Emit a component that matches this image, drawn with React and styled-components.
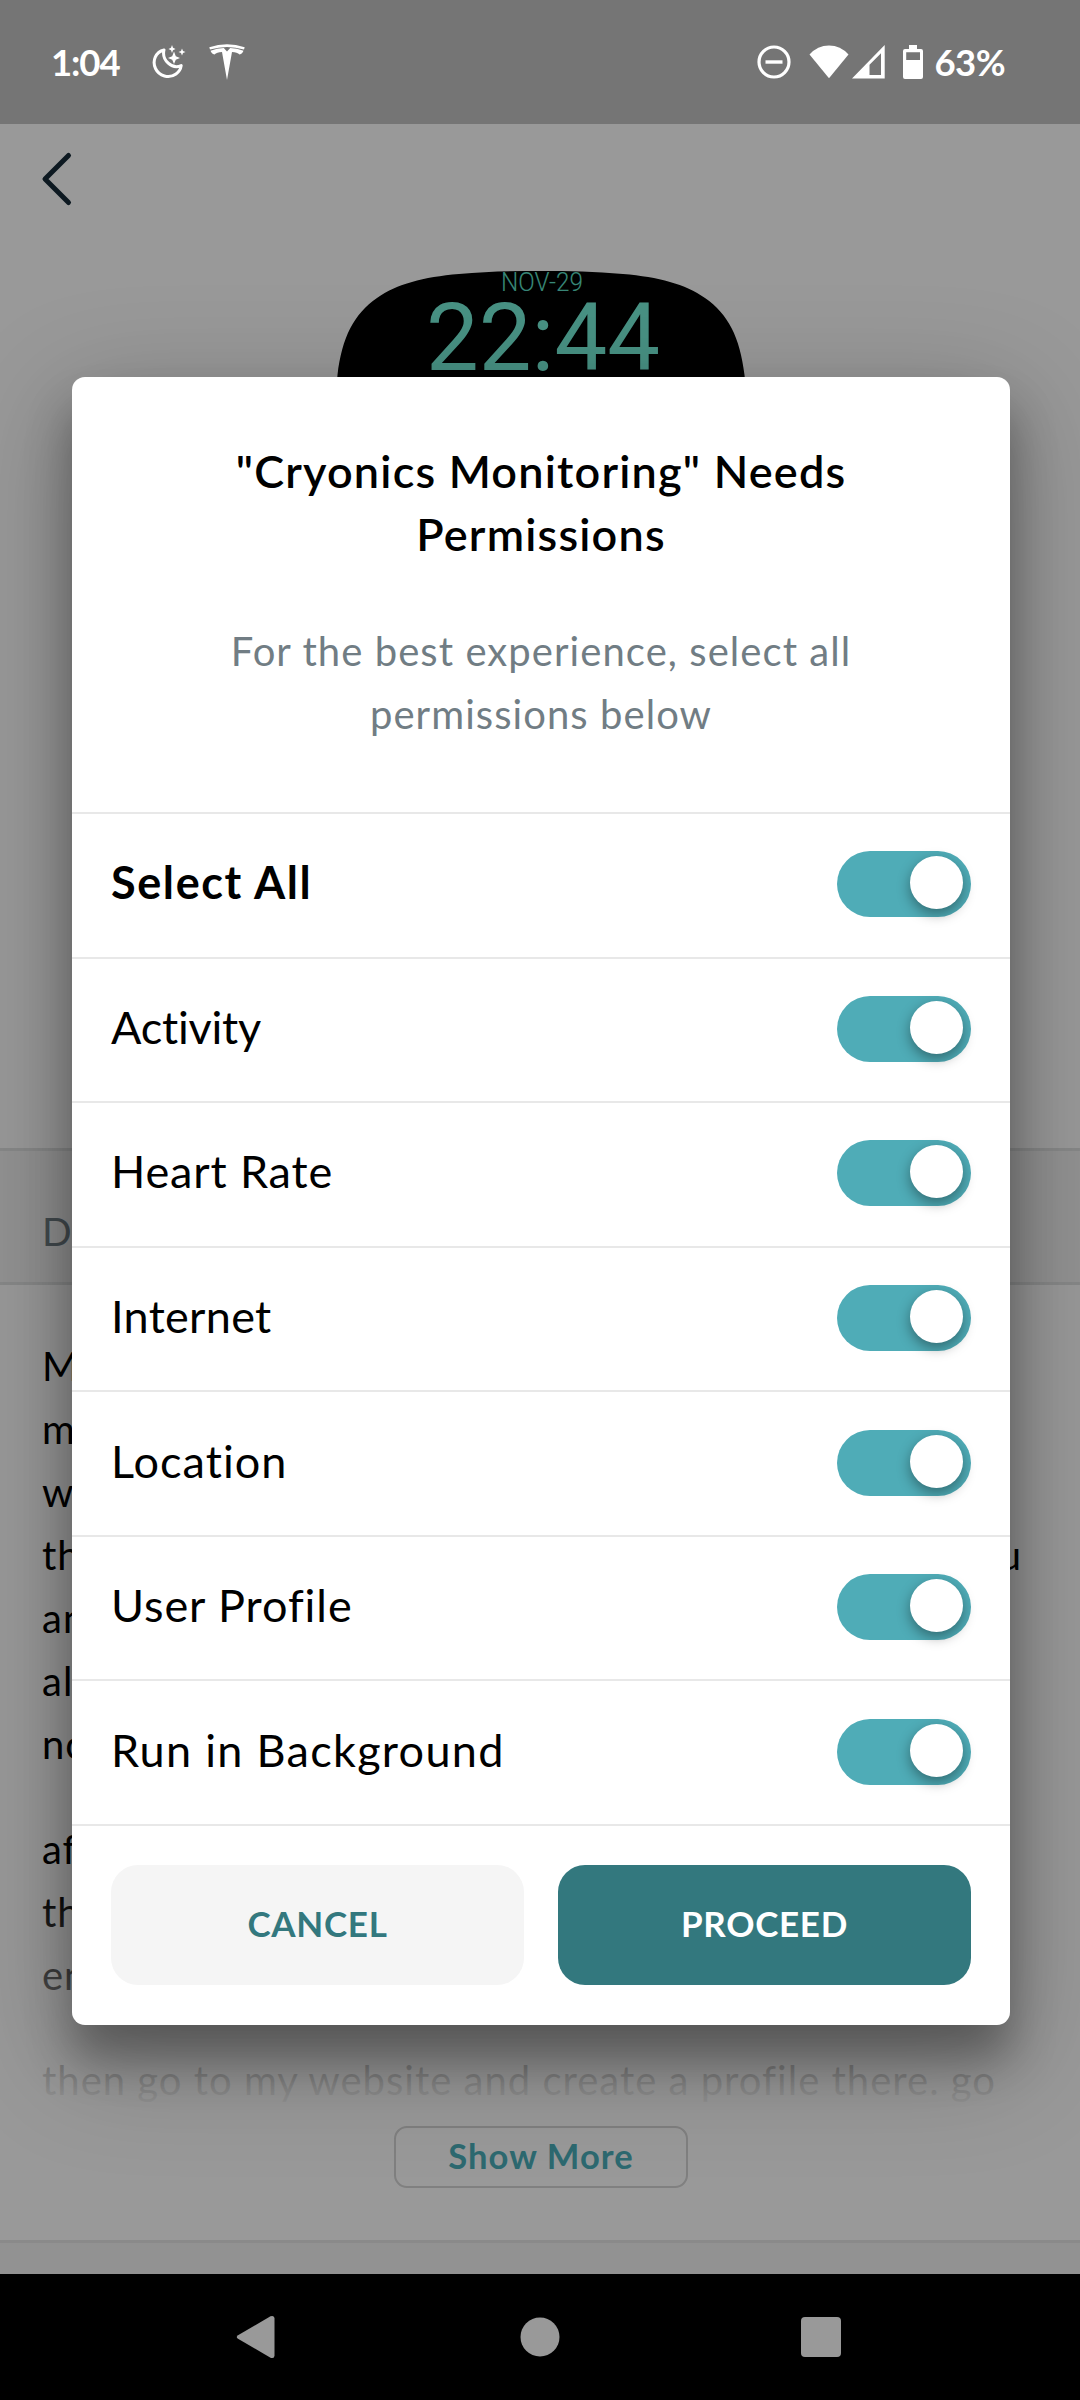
import React, { useState } from "react";
import styled, { createGlobalStyle } from "styled-components";

const GlobalStyle = createGlobalStyle`
  *, *::before, *::after { box-sizing: border-box; }
  body { margin: 0; background: #fff; }
  button { border: 0; padding: 0; background: none; font: inherit; color: inherit; }
`;

const Screen = styled.div`
  position: relative;
  display: flex;
  flex-direction: column;
  width: 1080px;
  height: 2400px;
  overflow: hidden;
  background: #fff;
  color: #000;
  font-family: Lato, "Open Sans", sans-serif;
  font-variant-ligatures: none;
`;

const StatusBar = styled.header`
  display: flex;
  justify-content: space-between;
  height: 124px;
  flex: none;
  padding: 0 75px 0 51px;
  background: #757575;
  color: #fff;
  font-size: 36.5px;
  font-weight: 700;
  line-height: 124px;
`;

const StatusGroup = styled.div`
  display: flex;
  align-items: center;
`;

const StatusText = styled.span`
  letter-spacing: ${(p) => p.$spacing || 0}px;
  margin-left: ${(p) => p.$gap || 0}px;
`;

const StatusIcon = styled.svg`
  display: block;
  flex: none;
  margin-left: ${(p) => p.$gap || 0}px;
  fill: #fff;
`;

const Page = styled.main`
  position: relative;
  display: flex;
  flex-direction: column;
  flex: 1;
  min-height: 0;
  overflow: hidden;
`;

const Dim = styled.div`
  position: absolute;
  inset: 0;
  background: rgba(0, 0, 0, 0.4);
`;

const Hero = styled.section`
  display: flex;
  flex-direction: column;
  flex: none;
  height: 1024px;
`;

const BackButton = styled.button`
  display: flex;
  align-items: flex-start;
  flex: none;
  width: 112px;
  height: 147px;
  padding: 26px 0 0 38px;
`;

const WatchFace = styled.svg`
  display: block;
  align-self: center;
  flex: none;
  margin-left: 1px;
`;

const SectionHeading = styled.h2`
  flex: none;
  height: 137px;
  margin: 0;
  padding: 49px 42px 0;
  border-top: 3px solid #e1e3e3;
  border-bottom: 3px solid #e1e3e3;
  background: #f4f4f4;
  color: #717d84;
  font-size: 39px;
  font-weight: 400;
  line-height: 63px;
`;

const Description = styled.section`
  display: flex;
  flex-direction: column;
  align-items: center;
  flex: none;
  height: 955px;
`;

const Excerpt = styled.div`
  position: relative;
  width: 100%;
  height: 827px;
  padding: 50px 42px 0;
  font-size: 40px;
  line-height: 63px;
`;

const Fade = styled.div`
  position: absolute;
  left: 0;
  right: 0;
  bottom: 0;
  height: 232px;
  background: linear-gradient(rgba(255, 255, 255, 0), #fff);
`;

const Paragraph = styled.p`
  margin: 0 0 42px;
  white-space: nowrap;
  letter-spacing: 1px;
`;

const Line = styled.span`
  display: flex;
  justify-content: space-between;
  width: ${(p) => p.$width || 978}px;
`;

const ShowMore = styled.button`
  width: 294px;
  height: 62px;
  margin-top: 14px;
  margin-left: 2px;
  padding-bottom: 3px;
  border: 2px solid #d5d5d5;
  border-radius: 13px;
  color: #4cb0bb;
  font-size: 34.5px;
  font-weight: 700;
  letter-spacing: 1.1px;
`;

const NextSection = styled.div`
  flex: 1;
  border-top: 3px solid #e6e6e6;
  background: #f4f4f4;
`;

const NavBar = styled.nav`
  display: flex;
  align-items: center;
  justify-content: space-between;
  flex: none;
  height: 126px;
  padding: 0 239px 0 236px;
  background: #000;
  fill: #999;

  svg { display: block; }
`;

const HomeIcon = styled.svg`
  margin-left: 3px;
`;

const Dialog = styled.section`
  position: absolute;
  top: 377px;
  left: 72px;
  width: 938px;
  height: 1647.5px;
  display: flex;
  flex-direction: column;
  border-radius: 13px;
  background: #fff;
  box-shadow:
    0 34px 46px 0 rgba(0, 0, 0, 0.31),
    0 30px 110px 12px rgba(0, 0, 0, 0.22);
`;

const DialogHeader = styled.div`
  height: 435px;
  padding-top: 62.5px;
  text-align: center;
  line-height: 63px;
`;

const Title = styled.h1`
  margin: 0;
  font-size: 45px;
  font-weight: 600;
  letter-spacing: 1.2px;
`;

const Subtitle = styled.p`
  margin: 54px 0 0;
  color: #717d84;
  font-size: 40px;
  letter-spacing: 1.06px;
`;

const PermissionList = styled.ul`
  margin: 0;
  padding: 0;
  list-style: none;
  border-bottom: 2px solid #e8e8e8;
`;

const PermissionRow = styled.li`
  display: flex;
  align-items: center;
  justify-content: space-between;
  height: 144.57px;
  padding: 0 39px 0 40px;
  border-top: 2px solid #e8e8e8;
`;

const PermissionName = styled.span`
  padding-bottom: 6px;
  margin-left: -1px;
  font-size: 45px;
  font-weight: ${(p) => (p.$strong ? 700 : 400)};
  letter-spacing: ${(p) => p.$spacing || 0}px;
`;

const Toggle = styled.button`
  display: flex;
  justify-content: ${(p) => (p.$on ? "flex-end" : "flex-start")};
  width: 134px;
  height: 66px;
  margin-bottom: 2px;
  padding: 5px 8px;
  border-radius: 33px;
  background: ${(p) => (p.$on ? "#4facb7" : "#cfd4d6")};
`;

const Knob = styled.span`
  width: 53px;
  height: 53px;
  border-radius: 50%;
  background: #fff;
  box-shadow: 0 5px 13px rgba(0, 0, 0, 0.38);
`;

const Actions = styled.div`
  display: flex;
  gap: 34px;
  padding: 39px 39px 0;
`;

const ActionButton = styled.button`
  flex: 1;
  height: 120px;
  padding-bottom: 3px;
  border-radius: 27px;
  background: ${(p) => (p.$primary ? "#33787e" : "#f5f5f5")};
  color: ${(p) => (p.$primary ? "#fff" : "#33787e")};
  font-size: 35px;
  font-weight: 700;
  letter-spacing: 0.7px;
`;

const PERMISSIONS = [
  { name: "Activity", spacing: -0.2 },
  { name: "Heart Rate", spacing: 0.85 },
  { name: "Internet", spacing: 0.3 },
  { name: "Location", spacing: 1.05 },
  { name: "User Profile", spacing: 0.95 },
  { name: "Run in Background", spacing: 1.3 },
];

const EXCERPT_LINES = [
  ["Monitor", "your", "vital", "signs"],
  ["make", "sure", "that", "someone"],
  ["will", "be", "alerted"],
  ["that", "help", "reaches", "you"],
  ["and", "keeps"],
  ["all", "your"],
  ["notified."],
];

function Status() {
  return (
    <StatusBar>
      <StatusGroup>
        <StatusText $spacing={-1.1}>1:04</StatusText>
        <StatusIcon width="34" height="34" viewBox="0 0 34 34" $gap={32}>
          <path
            d="M12 5 C3.5 7 0 16 3.5 23.5 C7 31 17 34 24 29 C27.500 26.500 28.800 23.500 29.200 20.600 C20 25 9.500 15 12 5 Z"
            fill="none"
            stroke="#fff"
            strokeWidth="3"
            strokeLinejoin="round"
          />
          <path d="M22 6.500 L23.800 11.200 L28 13 L23.800 14.800 L22 19 L20.200 14.800 L16 13 L20.200 11.200Z" />
          <path d="M20 0 L21 2.800 L23.500 4 L21 5.200 L20 8 L19 5.200 L16.500 4 L19 2.800Z" />
          <path d="M30 3.500 L31 6 L33.500 7 L31 8 L30 10.500 L29 8 L26.500 7 L29 6Z" />
        </StatusIcon>
        <StatusIcon width="36" height="36" viewBox="0 0 36 36" $gap={23}>
          <path d="M0.300 3.200 Q18 -2.500 35.700 3.200 L35 5.500 Q18 .5 1 5.500Z" />
          <path d="M1.500 6.700 Q8 4.200 14.800 4.100 L18 7.500 L21.200 4.100 Q28 4.200 34.500 6.700 C33.800 8.600 32.500 10 30.500 10.500 C29 8.600 26.500 8 23 7.900 L18 36 L13 7.900 C9.500 8 7 8.600 5.500 10.500 C3.500 10 2.200 8.600 1.500 6.700Z" />
        </StatusIcon>
      </StatusGroup>
      <StatusGroup>
        <StatusIcon width="34" height="34" viewBox="0 0 34 34">
          <circle cx="17" cy="17" r="15" fill="none" stroke="#fff" strokeWidth="3.2" />
          <rect x="8.500" y="15.300" width="17" height="3.400" />
        </StatusIcon>
        <StatusIcon width="40" height="34" viewBox="0 0 40 34" $gap={18}>
          <path d="M0.500 9.500 Q8.500 .5 20 .5 Q31.500 .5 39.500 9.500 L20 33.300Z" />
        </StatusIcon>
        <StatusIcon width="33" height="34" viewBox="0 0 33 34" $gap={3}>
          <path fillRule="evenodd" d="M0 33.500 L32.700 0 V33.500Z M17.500 19.800 V30 H29 V8.200Z" />
        </StatusIcon>
        <StatusIcon width="20" height="34" viewBox="0 0 20 34" $gap={18}>
          <path fillRule="evenodd" d="M6 0 H14 V4 H18 Q20 4 20 6 V32 Q20 34 18 34 H2 Q0 34 0 32 V6 Q0 4 2 4 H6Z M3.200 7.300 V15 H17 V7.300Z" />
        </StatusIcon>
        <StatusText $gap={12} $spacing={-0.6}>63%</StatusText>
      </StatusGroup>
    </StatusBar>
  );
}

function Watch() {
  return (
    <WatchFace width="412" height="620" viewBox="-2 0 412 620">
      <path
        d="M204 0 C176 0 150 0.500 122 3 C86 6 60 13 40 27 C17 43 5 66 0.500 104 C-2 128 -2 150 -2 180 V500 C-2 580 40 618 204 618 C368 618 410 580 410 500 V180 C410 150 410 128 407.500 104 C403 66 391 43 368 27 C348 13 322 6 286 3 C258 0.500 232 0 204 0Z"
        fill="#000"
      />
      <text
        x="164"
        y="19.500"
        textLength="82"
        lengthAdjust="spacingAndGlyphs"
        fontFamily="Roboto, sans-serif"
        fontWeight="300"
        fontSize="25"
        fill="#5fe0c8"
      >
        NOV-29
      </text>
      <text
        x="89"
        y="99"
        textLength="234"
        lengthAdjust="spacingAndGlyphs"
        fontFamily="Roboto, sans-serif"
        fontWeight="400"
        fontSize="95"
        fill="#78f3dc"
      >
        22:44
      </text>
    </WatchFace>
  );
}

export default function App() {
  const [granted, setGranted] = useState(() => PERMISSIONS.map(() => true));
  const allOn = granted.every(Boolean);
  const flip = (i) => setGranted((g) => g.map((on, n) => (n === i ? !on : on)));

  return (
    <>
      <GlobalStyle />
      <Screen>
        <Status />
        <Page>
          <Hero>
            <BackButton aria-label="Back">
              <svg width="36" height="58" viewBox="0 0 36 58" fill="none">
                <path d="M30.500 5.500 L7 29 L30.500 52.500" stroke="#172b38" strokeWidth="5" strokeLinecap="round" strokeLinejoin="round" />
              </svg>
            </BackButton>
            <Watch />
          </Hero>
          <SectionHeading>Description</SectionHeading>
          <Description>
            <Excerpt>
              <Paragraph>
                {EXCERPT_LINES.map((words) => (
                  <Line key={words[0]} $width={words.includes("you") ? 980 : 700}>
                    {words.map((w) => (
                      <span key={w}>{w}</span>
                    ))}
                  </Line>
                ))}
              </Paragraph>
              <Paragraph>
                after installing
                <br />
                the app please
                <br />
                enable permissions
              </Paragraph>
              <Paragraph>then go to my website and create a profile there. go</Paragraph>
              <Fade />
            </Excerpt>
            <ShowMore>Show More</ShowMore>
          </Description>
          <NextSection />
          <Dim />
        </Page>
        <NavBar>
          <svg width="40" height="44" viewBox="0 0 40 44">
            <path d="M2 20.200 L34.500 1.300 Q38.500 0 38.500 3.500 V40.500 Q38.500 44 34.500 42.700 L2 23.800 Q-.5 22 2 20.200Z" />
          </svg>
          <HomeIcon width="40" height="40" viewBox="0 0 40 40">
            <circle cx="20" cy="20" r="19.500" />
          </HomeIcon>
          <svg width="40" height="40" viewBox="0 0 40 40">
            <rect width="40" height="40" rx="4" />
          </svg>
        </NavBar>

        <Dialog role="dialog">
          <DialogHeader>
            <Title>
              "Cryonics Monitoring" Needs
              <br />
              Permissions
            </Title>
            <Subtitle>
              For the best experience, select all
              <br />
              permissions below
            </Subtitle>
          </DialogHeader>
          <PermissionList>
            <PermissionRow>
              <PermissionName $strong $spacing={1.6}>Select All</PermissionName>
              <Toggle $on={allOn} onClick={() => setGranted(granted.map(() => !allOn))}>
                <Knob />
              </Toggle>
            </PermissionRow>
            {PERMISSIONS.map((p, i) => (
              <PermissionRow key={p.name}>
                <PermissionName $spacing={p.spacing}>{p.name}</PermissionName>
                <Toggle $on={granted[i]} onClick={() => flip(i)}>
                  <Knob />
                </Toggle>
              </PermissionRow>
            ))}
          </PermissionList>
          <Actions>
            <ActionButton>CANCEL</ActionButton>
            <ActionButton $primary>PROCEED</ActionButton>
          </Actions>
        </Dialog>
      </Screen>
    </>
  );
}
